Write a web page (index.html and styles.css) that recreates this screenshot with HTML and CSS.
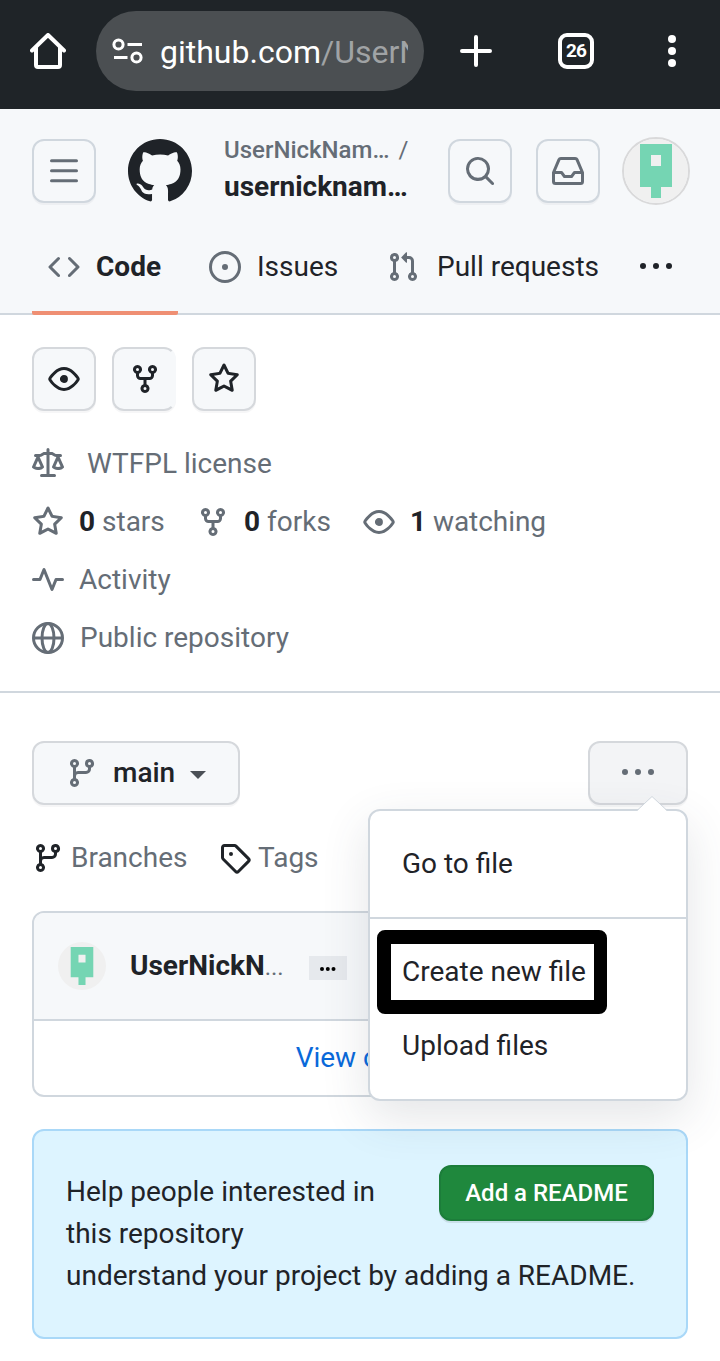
FILE: index.html
```html
<!DOCTYPE html>
<html lang="en">
<head>
<meta charset="utf-8">
<title>UserNickName repository</title>
<link rel="stylesheet" href="styles.css">
</head>
<body>
<svg class="sprite" aria-hidden="true">
  <symbol id="eye" viewBox="0 0 16 16"><path d="M8 2c1.981 0 3.671.992 4.933 2.078 1.27 1.091 2.187 2.345 2.637 3.023a1.62 1.62 0 0 1 0 1.798c-.45.678-1.367 1.932-2.637 3.023C11.67 13.008 9.981 14 8 14c-1.981 0-3.671-.992-4.933-2.078C1.797 10.83.88 9.576.43 8.898a1.62 1.62 0 0 1 0-1.798c.45-.677 1.367-1.931 2.637-3.022C4.33 2.992 6.019 2 8 2ZM1.679 7.932a.12.12 0 0 0 0 .136c.411.622 1.241 1.75 2.366 2.717C5.176 11.758 6.527 12.5 8 12.5c1.473 0 2.825-.742 3.955-1.715 1.124-.967 1.954-2.096 2.366-2.717a.12.12 0 0 0 0-.136c-.412-.621-1.242-1.75-2.366-2.717C10.824 4.242 9.473 3.5 8 3.5c-1.473 0-2.825.742-3.955 1.715-1.124.967-1.954 2.096-2.366 2.717ZM8 10a2 2 0 1 1-.001-3.999A2 2 0 0 1 8 10Z"/></symbol>
  <symbol id="fork" viewBox="0 0 16 16"><path d="M5 5.372v.878c0 .414.336.75.75.75h4.5a.75.75 0 0 0 .75-.75v-.878a2.25 2.25 0 1 1 1.5 0v.878a2.25 2.25 0 0 1-2.25 2.25h-1.5v2.128a2.251 2.251 0 1 1-1.5 0V8.5h-1.5A2.25 2.25 0 0 1 3.5 6.25v-.878a2.25 2.25 0 1 1 1.5 0ZM5 3.25a.75.75 0 1 0-1.5 0 .75.75 0 0 0 1.5 0Zm6.75.75a.75.75 0 1 0 0-1.5.75.75 0 0 0 0 1.5Zm-3 8.75a.75.75 0 1 0-1.5 0 .75.75 0 0 0 1.5 0Z"/></symbol>
  <symbol id="star" viewBox="0 0 16 16"><path d="M8 .25a.75.75 0 0 1 .673.418l1.882 3.815 4.21.612a.75.75 0 0 1 .416 1.279l-3.046 2.97.719 4.192a.751.751 0 0 1-1.088.791L8 12.347l-3.766 1.98a.75.75 0 0 1-1.088-.79l.72-4.194L.818 6.374a.75.75 0 0 1 .416-1.28l4.21-.611L7.327.668A.75.75 0 0 1 8 .25Zm0 2.445L6.615 5.5a.75.75 0 0 1-.564.41l-3.097.45 2.24 2.184a.75.75 0 0 1 .216.664l-.528 3.084 2.769-1.456a.75.75 0 0 1 .698 0l2.77 1.456-.53-3.084a.75.75 0 0 1 .216-.664l2.24-2.183-3.096-.45a.75.75 0 0 1-.564-.41L8 2.694Z"/></symbol>
  <symbol id="branch" viewBox="0 0 16 16"><path d="M9.5 3.25a2.25 2.25 0 1 1 3 2.122V6A2.5 2.5 0 0 1 10 8.5H6a1 1 0 0 0-1 1v1.128a2.251 2.251 0 1 1-1.5 0V5.372a2.25 2.25 0 1 1 1.5 0v1.836A2.493 2.493 0 0 1 6 7h4a1 1 0 0 0 1-1v-.628A2.25 2.25 0 0 1 9.5 3.25Zm-6 0a.75.75 0 1 0 1.5 0 .75.75 0 0 0-1.5 0Zm8.25-.75a.75.75 0 1 0 0 1.5.75.75 0 0 0 0-1.5ZM4.25 12a.75.75 0 1 0 0 1.5.75.75 0 0 0 0-1.5Z"/></symbol>
  <symbol id="dots" viewBox="0 0 32 32"><circle cx="3" cy="15" r="3"/><circle cx="16" cy="15" r="3"/><circle cx="29" cy="15" r="3"/></symbol>
  <symbol id="identicon" viewBox="0 0 68 68"><circle cx="34" cy="34" r="34" fill="#f0f0f0"/><path fill="#75d5b3" fill-rule="evenodd" d="M18 7h32v43H39v11H29V50H18zM29 18v11h10V18z"/></symbol>
</svg>

<div class="browser">
  <svg class="home" viewBox="0 0 36 36" fill="none" stroke="#fff" stroke-width="4" stroke-linejoin="round" stroke-linecap="round"><path d="M2 17.500 18 2l16 15.500M6 15v17q0 2 2 2h20q2 0 2-2V15"/></svg>
  <div class="address">
    <svg class="tune" viewBox="0 0 32 26" fill="none" stroke="#fff" stroke-width="3"><circle cx="6.500" cy="6.500" r="4.600"/><circle cx="24.500" cy="19.500" r="4.600"/><path d="M15.500 6.500H30M2 19.500h13.500"/></svg>
    <div class="url">github.com<span>/UserN</span></div>
  </div>
  <svg class="plus" viewBox="0 0 32 32" stroke="#fff" stroke-width="4" stroke-linecap="round"><path d="M2 16h28M16 2v28"/></svg>
  <div class="tabcount">26</div>
  <svg class="kebab" viewBox="0 0 8 32" fill="#fff"><circle cx="4" cy="4" r="4"/><circle cx="4" cy="16" r="4"/><circle cx="4" cy="28" r="4"/></svg>
</div>

<header class="header">
  <div class="topbar">
    <div class="btn menu-btn"><svg class="icon muted" viewBox="0 0 32 32" stroke="currentColor" stroke-width="3" stroke-linecap="round"><path d="M3.500 5.700h25M3.500 15.700h25M3.500 25.700h25"/></svg></div>
    <svg class="logo" viewBox="0 0 16 16"><path d="M8 0C3.580 0 0 3.580 0 8c0 3.540 2.290 6.530 5.470 7.590.4.070.55-.170.55-.380 0-.190-.010-.820-.010-1.490-2.010.370-2.530-.490-2.690-.940-.090-.230-.480-.940-.820-1.130-.280-.150-.680-.520-.010-.530.630-.010 1.080.580 1.230.820.720 1.210 1.870.870 2.330.660.070-.520.280-.870.510-1.070-1.780-.200-3.640-.890-3.640-3.950 0-.870.310-1.590.820-2.150-.080-.200-.360-1.020.080-2.120 0 0 .670-.210 2.200.820.640-.180 1.320-.270 2-.270.680 0 1.360.090 2 .270 1.530-1.040 2.200-.820 2.200-.820.440 1.100.160 1.920.080 2.120.510.560.820 1.270.820 2.150 0 3.070-1.870 3.750-3.650 3.950.290.250.540.730.540 1.480 0 1.070-.010 1.930-.010 2.200 0 .210.150.460.550.380A8.013 8.013 0 0 0 16 8c0-4.420-3.580-8-8-8z"/></svg>
    <div class="crumbs"><div class="owner">UserNickNam… <span>/</span></div><div class="repo">usernicknam…</div></div>
    <div class="btn search"><svg class="icon muted" viewBox="0 0 16 16"><path d="M10.680 11.740a6 6 0 0 1-7.922-8.982 6 6 0 0 1 8.982 7.922l3.040 3.040a.749.749 0 0 1-.326 1.275.749.749 0 0 1-.734-.215ZM11.500 7a4.499 4.499 0 1 0-8.997 0A4.499 4.499 0 0 0 11.500 7Z"/></svg></div>
    <div class="btn inbox"><svg class="icon muted" viewBox="0 0 16 16"><path d="M2.800 2.060A1.750 1.750 0 0 1 4.410 1h7.180c.7 0 1.333.417 1.610 1.060l2.740 6.395c.040.093.060.194.060.295v4.500A1.750 1.750 0 0 1 14.250 15H1.750A1.750 1.750 0 0 1 0 13.250v-4.500c0-.101.020-.202.060-.295Zm1.610.440a.25.25 0 0 0-.230.152L1.887 8H4.750a.75.75 0 0 1 .600.300L6.625 10h2.750l1.275-1.700a.75.75 0 0 1 .600-.300h2.863L11.820 2.652a.25.25 0 0 0-.230-.152Zm10.090 7h-2.875l-1.275 1.700a.75.75 0 0 1-.600.300h-3.500a.75.75 0 0 1-.600-.300L4.375 9.500H1.500v3.750c0 .138.112.25.25.25h12.500a.25.25 0 0 0 .25-.25Z"/></svg></div>
    <div class="avatar"><svg viewBox="0 0 68 68"><use href="#identicon"/></svg></div>
  </div>
  <nav class="tabs">
    <div class="tab tab-code"><svg class="icon muted" viewBox="0 0 16 16"><path d="m11.280 3.220 4.250 4.250a.75.75 0 0 1 0 1.060l-4.250 4.250a.749.749 0 0 1-1.275-.326.749.749 0 0 1 .215-.734L13.940 8l-3.720-3.720a.749.749 0 0 1 .326-1.275.749.749 0 0 1 .734.215Zm-6.560 0a.751.751 0 0 1 1.042.018.751.751 0 0 1 .018 1.042L2.060 8l3.720 3.720a.749.749 0 0 1-.326 1.275.749.749 0 0 1-.734-.215L.470 8.530a.75.75 0 0 1 0-1.060Z"/></svg><b>Code</b></div>
    <div class="tab tab-issues"><svg class="icon muted" viewBox="0 0 16 16"><path d="M8 9.500a1.500 1.500 0 1 0 0-3 1.500 1.500 0 0 0 0 3ZM8 0a8 8 0 1 1 0 16A8 8 0 0 1 8 0ZM1.500 8a6.500 6.500 0 1 0 13 0 6.500 6.500 0 0 0-13 0Z"/></svg><span>Issues</span></div>
    <div class="tab tab-pulls"><svg class="icon muted" viewBox="0 0 16 16"><path d="M1.500 3.250a2.250 2.250 0 1 1 3 2.122v5.256a2.251 2.251 0 1 1-1.500 0V5.372A2.250 2.250 0 0 1 1.500 3.250Zm5.677-.177L9.573.677A.25.25 0 0 1 10 .854V2.500h1A2.500 2.500 0 0 1 13.500 5v5.628a2.251 2.251 0 1 1-1.500 0V5a1 1 0 0 0-1-1h-1v1.646a.25.25 0 0 1-.427.177L7.177 3.427a.25.25 0 0 1 0-.354ZM3.750 2.500a.75.75 0 1 0 0 1.500.75.75 0 0 0 0-1.500Zm0 9.500a.75.75 0 1 0 0 1.500.75.75 0 0 0 0-1.500Zm8.250.75a.75.75 0 1 0 1.500 0 .75.75 0 0 0-1.500 0Z"/></svg><span>Pull requests</span></div>
    <svg class="icon more"><use href="#dots"/></svg>
  </nav>
</header>

<section class="about">
  <div class="actions">
    <div class="btn"><svg class="icon"><use href="#eye"/></svg></div>
    <div class="btn btn-fork"><svg class="icon"><use href="#fork"/></svg></div>
    <div class="btn"><svg class="icon"><use href="#star"/></svg></div>
  </div>
  <div class="meta">
    <div class="row"><svg class="icon law" viewBox="0 0 16 16"><path d="M8.750.75V2h.985c.304 0 .603.080.867.231l1.290.736c.038.022.080.033.124.033h2.234a.75.75 0 0 1 0 1.500h-.427l2.111 4.692a.75.75 0 0 1-.154.838c-.25.230-.460.380-.757.541C14.556 10.780 13.880 11 13 11a4.498 4.498 0 0 1-2.023-.454 3.544 3.544 0 0 1-.757-.516.75.75 0 0 1-.154-.838L12.178 4.500h-.162c-.305 0-.604-.079-.868-.231l-1.290-.736a.245.245 0 0 0-.124-.033H8.750V13h2.500a.75.75 0 0 1 0 1.500h-6.500a.75.75 0 0 1 0-1.500h2.500V3.500h-.984a.245.245 0 0 0-.124.033l-1.289.737c-.265.150-.564.230-.869.230h-.162l2.112 4.692a.75.75 0 0 1-.154.838c-.25.230-.460.380-.757.541C4.556 10.780 3.880 11 3 11a4.498 4.498 0 0 1-2.023-.454 3.544 3.544 0 0 1-.757-.516.75.75 0 0 1-.154-.838L2.178 4.500H1.750a.75.75 0 0 1 0-1.500h2.234a.249.249 0 0 0 .125-.033l1.288-.737c.265-.150.564-.230.869-.230h.984V.75a.75.75 0 0 1 1.500 0Zm2.945 8.477c.285.135.718.273 1.305.273s1.020-.138 1.305-.273L13 6.327Zm-10 0c.285.135.718.273 1.305.273s1.020-.138 1.305-.273L3 6.327Z"/></svg><span>WTFPL license</span></div>
    <div class="row">
      <svg class="icon"><use href="#star"/></svg><span class="stars"><b>0</b> stars</span>
      <svg class="icon"><use href="#fork"/></svg><span class="forks"><b>0</b> forks</span>
      <svg class="icon"><use href="#eye"/></svg><span class="watching"><b>1</b> watching</span>
    </div>
    <div class="row"><svg class="icon" viewBox="0 0 16 16"><path d="M6 2c.306 0 .582.187.696.471L10 10.731l1.304-3.260A.751.751 0 0 1 12 7h3.250a.75.75 0 0 1 0 1.500h-2.742l-1.812 4.528a.751.751 0 0 1-1.392 0L6 4.770 4.696 8.030A.75.75 0 0 1 4 8.500H.75a.75.75 0 0 1 0-1.500h2.742l1.812-4.529A.751.751 0 0 1 6 2Z"/></svg><span>Activity</span></div>
    <div class="row public"><svg class="icon" viewBox="0 0 32 32" fill="none" stroke="currentColor" stroke-width="3"><circle cx="16" cy="16" r="14.500"/><ellipse cx="16" cy="16" rx="6" ry="14.500"/><path d="M1.500 16h29"/></svg><span>Public repository</span></div>
  </div>
</section>

<main class="content">
  <div class="toolbar">
    <div class="btn main-btn"><svg class="icon muted"><use href="#branch"/></svg><span>main</span><i class="caret"></i></div>
    <div class="dropdown">
      <div class="btn dots-btn"><svg class="icon muted"><use href="#dots"/></svg></div>
      <div class="popover">
        <svg class="notch" viewBox="0 0 32 16"><path d="M1 15 16 .5 31 15v1H1z" fill="#fff"/><path d="M1 14.500 16 .5l15 14" fill="none" stroke="#d0d7de"/></svg>
        <div class="item first">Go to file</div>
        <div class="item"><span>Create new file</span><div class="highlight"></div></div>
        <div class="item">Upload files</div>
      </div>
    </div>
  </div>
  <div class="refs">
    <svg class="icon"><use href="#branch"/></svg><span class="branches">Branches</span>
    <svg class="icon" viewBox="0 0 16 16"><path d="M1 7.775V2.750C1 1.784 1.784 1 2.750 1h5.025c.464 0 .910.184 1.238.513l6.250 6.250a1.750 1.750 0 0 1 0 2.474l-5.026 5.026a1.750 1.750 0 0 1-2.474 0l-6.250-6.250A1.752 1.752 0 0 1 1 7.775Zm1.500 0c0 .066.026.130.073.177l6.250 6.250a.25.25 0 0 0 .354 0l5.025-5.025a.25.25 0 0 0 0-.354l-6.250-6.250a.25.25 0 0 0-.177-.073H2.750a.25.25 0 0 0-.25.250ZM6 5a1 1 0 1 1 0 2 1 1 0 0 1 0-2Z"/></svg><span>Tags</span>
  </div>
  <div class="commit">
    <div class="commit-head"><svg class="small-avatar"><use href="#identicon"/></svg><div class="author">UserNickN<span>...</span></div>
      <div class="chip"><svg viewBox="0 0 16 4"><circle cx="2" cy="2" r="2"/><circle cx="7.800" cy="2" r="2"/><circle cx="13.500" cy="2" r="2"/></svg></div></div>
    <div class="view">View code</div>
  </div>
  <div class="flash">
    <div class="flash-top"><div>Help people interested in this repository</div><div class="readme-btn">Add a README</div></div>
    <div>understand your project by adding a README.</div>
  </div>
</main>
</body>
</html>
```
FILE: styles.css
```css
* { box-sizing: border-box; }
body { margin: 0; width: 720px; height: 1361px; overflow: hidden; background: #fff; color: #1f2328; font: 28px/42px Roboto, sans-serif; }
.sprite { position: absolute; width: 0; height: 0; }
svg { display: block; flex: none; }
b { font-weight: 700; }
.icon { width: 32px; height: 32px; fill: currentColor; }
.icon[fill="none"] { fill: none; }
.muted { color: #656d76; }

.browser { height: 109px; padding: 11px 44px 18px 30px; display: flex; align-items: center; background: #1f2428; }
.home { width: 36px; height: 36px; margin-right: 30px; }
.address { width: 328px; height: 80px; flex: none; border-radius: 40px; background: #4b4f52; display: flex; align-items: center; padding: 0 16px; }
.tune { width: 32px; height: 26px; margin-right: 16px; }
.url { width: 248px; overflow: hidden; white-space: nowrap; color: #fff; font-size: 32px; padding-top: 1px; }
.url span { color: #a0a3a5; }
.plus { width: 32px; height: 32px; margin-left: 36px; }
.tabcount { width: 36px; height: 36px; flex: none; margin-left: 66px; border: 4px solid #fff; border-radius: 9px; color: #fff; font: 700 19px/28px Roboto, sans-serif; letter-spacing: -.8px; text-align: center; }
.kebab { width: 8px; height: 32px; margin-left: 74px; }

.header { height: 206px; background: #f6f8fa; border-bottom: 2px solid #d0d7de; padding: 28px 30px 0 32px; display: flex; flex-direction: column; }
.topbar { display: flex; align-items: center; height: 68px; flex: none; }
.btn { width: 64px; height: 64px; flex: none; display: flex; align-items: center; justify-content: center; border: 2px solid #d5d8dc; border-radius: 12px; background: #f6f8fa; box-shadow: 0 2px 0 rgba(31,35,40,.04); }
.topbar .btn { border-color: #d0d7de; }
.logo { width: 64px; height: 64px; margin: 0 32px; fill: #1f2328; }
.crumbs { width: 184px; white-space: nowrap; padding-bottom: 6px; }
.owner { font-size: 24px; line-height: 36px; font-weight: 500; color: #656d76; }
.owner span { margin-left: 3px; font-weight: 400; }
.repo { font-weight: 700; line-height: 37px; }
.search { margin-left: 40px; }
.inbox { margin: 0 22px 0 24px; }
.avatar { width: 68px; height: 68px; border: 2px solid #d9d9da; border-radius: 50%; overflow: hidden; }
.avatar svg { width: 68px; height: 68px; margin: -2px; }
.tabs { margin-top: 14px; display: flex; height: 96px; flex: none; }
.tab { display: flex; align-items: center; gap: 16px; white-space: nowrap; }
.tab-code { width: 146px; padding: 4px 0 0 16px; border-bottom: 4px solid #ef8f73; border-radius: 2px; }
.tab-issues { width: 178px; padding-left: 31px; }
.tab-pulls { padding-left: 31px; gap: 18px; }
.more { margin: 32px 0 0 41px; }

.about { height: 378px; border-bottom: 2px solid #d0d7de; padding: 32px; }
.actions { display: flex; gap: 16px; }
.btn-fork { border-right-color: #f6f8fa; padding-left: 2px; }
.meta { padding-top: 24px; color: #656d76; }
.row { height: 58px; display: flex; align-items: center; gap: 15px; white-space: nowrap; }
.row b { color: #1f2328; }
.law { margin-right: 8px; }
.public { gap: 16px; }
.stars { width: 103px; }
.forks { width: 104px; }
.watching { letter-spacing: -.05px; }

.content { padding: 48px 32px 0; }
.toolbar { display: flex; justify-content: space-between; }
.main-btn { width: 208px; font-weight: 500; justify-content: flex-start; padding-left: 32px; }
.main-btn span { margin: 0 15px; }
.caret { border: 8px solid transparent; border-top-color: #4b5056; border-bottom: 0; margin-top: 3px; }
.dropdown { position: relative; }
.dots-btn { width: 100px; background: #f3f4f6; border-color: #d5d8dc; }
.popover { position: absolute; z-index: 2; top: 68px; right: 0; width: 320px; height: 292px; border: 2px solid #d0d7de; border-radius: 12px; background: #fff; box-shadow: 0 16px 48px rgba(66,74,83,.14); }
.notch { position: absolute; width: 32px; height: 16px; right: 18px; top: -15px; }
.item { position: relative; height: 74px; padding: 16px 32px; white-space: nowrap; }
.item.first { height: 108px; padding-top: 32px; border-bottom: 2px solid #d0d7de; margin-bottom: 16px; }
.highlight { position: absolute; left: 7px; top: -5px; width: 230px; height: 84px; border: 14px solid #000; border-right-width: 13px; border-radius: 8px; }
.refs { display: flex; align-items: center; height: 42px; margin-top: 32px; color: #656d76; }
.refs .icon { color: #1f2328; }
.refs span { margin-left: 7px; }
.refs .branches { width: 148px; }
.commit { height: 186px; margin-top: 32px; border: 2px solid #d0d7de; border-radius: 12px; overflow: hidden; }
.commit-head { height: 108px; background: #f6f8fa; border-bottom: 2px solid #d0d7de; display: flex; align-items: center; padding-left: 24px; }
.small-avatar { width: 48px; height: 48px; }
.author { width: 155px; margin: 0 24px; font-weight: 700; white-space: nowrap; }
.author span { font-weight: 400; font-size: 24px; color: #656d76; }
.chip { width: 38px; height: 24px; background: #e6e9ed; display: flex; align-items: center; justify-content: center; margin-top: 4px; }
.chip svg { width: 16px; height: 4px; margin-top: 2px; }
.view { text-align: center; color: #0969da; padding-top: 16px; }
.flash { height: 210px; margin-top: 32px; border: 2px solid #a9d8f8; border-radius: 12px; background: #ddf4ff; padding: 40px 32px 0; white-space: nowrap; }
.flash-top { display: flex; justify-content: space-between; white-space: normal; }
.flash-top > div:first-child { width: 320px; }
.readme-btn { width: 215px; height: 56px; margin-top: -6px; border: 2px solid #1c7d3a; border-radius: 12px; background: #1f883d; color: #fff; font-size: 24px; line-height: 53px; font-weight: 500; text-align: center; box-shadow: 0 2px 0 rgba(31,35,40,.1); }
```
